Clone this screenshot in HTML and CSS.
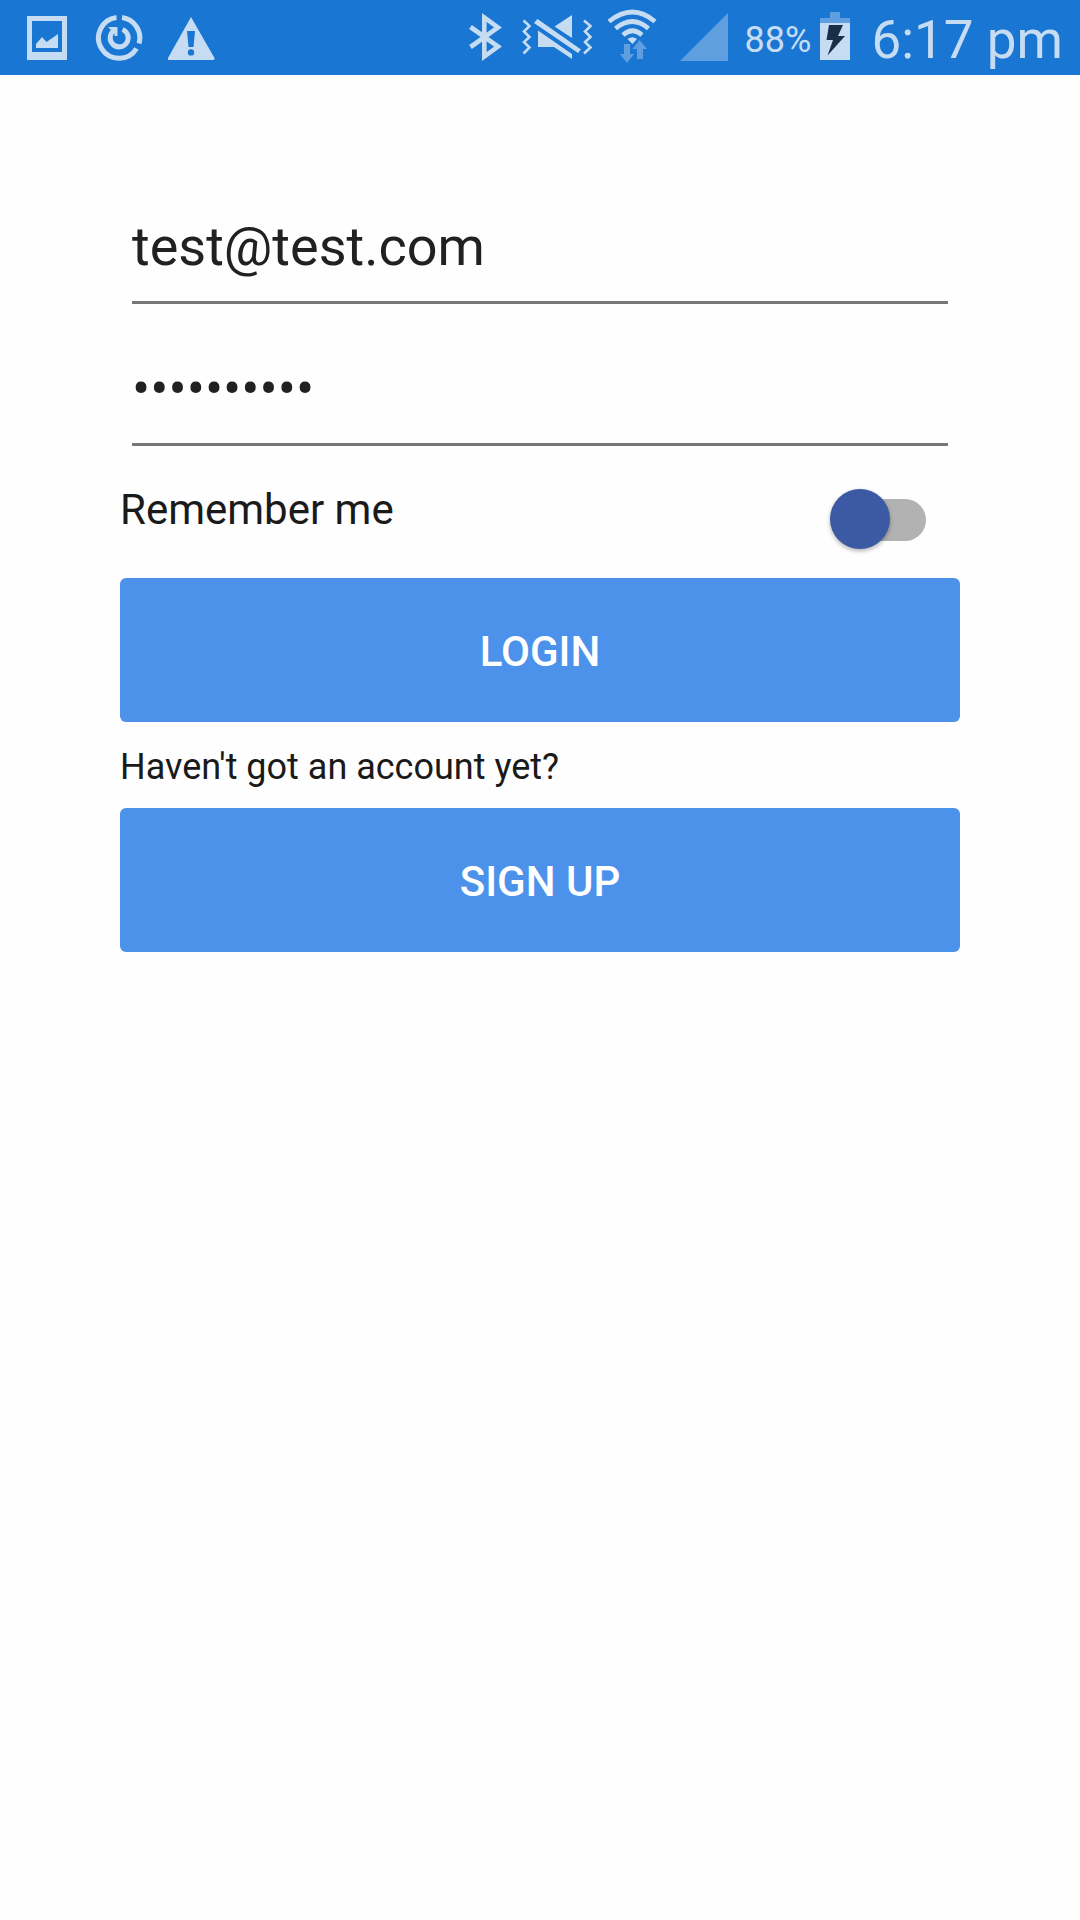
FILE: index.html
```html
<!DOCTYPE html>
<html lang="en">
<head>
<meta charset="utf-8">
<meta name="viewport" content="width=device-width, initial-scale=1">
<title>Login</title>
<link rel="stylesheet" href="styles.css">
</head>
<body>
<header class="status">
  <div class="status-group status-left">
    <svg width="46" height="75" viewBox="24 0 46 75" aria-hidden="true">
      <path fill="currentColor" fill-rule="evenodd" d="M27 16H67V60H27ZM32 21V52H62V21ZM36 44L42 37L46.500 42L58 34V48H36Z"/>
    </svg>
    <svg width="48" height="75" viewBox="95 0 48 75" fill="none" stroke="currentColor" stroke-width="5" aria-hidden="true">
      <path d="M116.500 17.500A20.500 20.500 0 1 0 136.500 48.500M122 17.500A20.500 20.500 0 0 1 139 43.500"/>
      <path d="M114 30.500A9 9 0 1 0 122.500 29.500"/>
      <path fill="currentColor" stroke="none" d="M108 27H117.500V36H114.500V32.500L111 34V30Z"/>
    </svg>
    <svg width="48" height="75" viewBox="168 0 48 75" aria-hidden="true">
      <path fill="currentColor" fill-rule="evenodd" d="M191 17L214.500 58Q215 60 213 60H169Q167 60 168 58ZM187 31L188.500 47H193.500L195 31ZM191 49.200A3.200 3.200 0 1 0 191 55.600A3.200 3.200 0 1 0 191 49.200Z"/>
    </svg>
  </div>
  <div class="status-group">
    <svg width="40" height="75" viewBox="467 0 40 75" fill="none" stroke="currentColor" stroke-width="4.600" aria-hidden="true">
      <path d="M469.500 27L497 46.500L483.300 56.500V17.500L497 27.500L469.500 47"/>
    </svg>
    <svg width="71" height="75" viewBox="521 0 71 75" aria-hidden="true">
      <path fill="currentColor" d="M553.500 26.500L571 15V38ZM537 30.500L571 54V59L553 47H537ZM536.500 19L580 49.500L577 53L533 23Z"/>
      <path fill="none" stroke="currentColor" stroke-width="2.600" d="M522.500 20.500L528.500 26L523 31.500L528.500 37L523 42L528.500 47.500L522.500 53.500M583 20.500L589.500 26L584 31.500L589.500 37L584 42L589.500 47.500L583 53.500"/>
    </svg>
    <svg width="51" height="75" viewBox="606 0 51 75" fill="none" stroke="currentColor" stroke-width="4.600" aria-hidden="true">
      <path d="M608 21.500Q631.500 2.500 654 21.500M614.500 28.500Q631.500 14.500 647.500 28.500M622 35Q631.500 26.500 641 35"/>
      <path fill="currentColor" stroke="none" d="M626.500 39Q631.500 35.500 636 39L631.500 44Z"/>
      <path class="dim" stroke="none" d="M623 44H629V54H633L626 63L619 54H623ZM638.500 40L646 49H642V59H636V49H631.500Z"/>
    </svg>
    <svg width="59" height="75" viewBox="671 0 59 75" aria-hidden="true">
      <path class="dim" d="M679 61L727 13V61Z"/>
    </svg>
    <div class="battery">
      <span class="percent">88%</span>
      <svg width="32" height="75" viewBox="819 0 32 75" aria-hidden="true">
        <path class="dim" d="M830 12H840V18H850V23H820V18H830Z"/>
        <path fill="currentColor" d="M820 23H850V60H820Z"/>
        <path class="bolt" d="M829 25H843L838 36H845L827.500 55.500L833 40H826.500Z"/>
      </svg>
    </div>
    <time class="clock" datetime="18:17">6:17 pm</time>
  </div>
</header>
<main>
  <form class="login">
    <input class="field" type="email" aria-label="Email" value="test@test.com">
    <input class="field" type="password" aria-label="Password" value="password12">
    <div class="remember">
      <label for="remember">Remember me</label>
      <input class="switch" id="remember" type="checkbox" role="switch">
    </div>
    <button class="action" type="submit">LOGIN</button>
    <p class="hint">Haven't got an account yet?</p>
    <button class="action" type="button">SIGN UP</button>
  </form>
</main>
</body>
</html>
```
FILE: styles.css
```css
* {
  box-sizing: border-box;
}

body {
  margin: 0;
  background: #fefefe;
  color: #1a1a1a;
  font-family: Roboto, "Liberation Sans", sans-serif;
}

.status {
  display: flex;
  justify-content: space-between;
  height: 75px;
  padding: 0 17px 0 24px;
  background: #1976d2;
  color: #c5dcf3;
}

.status svg {
  display: block;
  flex: none;
}

.status-group {
  display: flex;
  align-items: center;
  gap: 14px;
}

.status-left {
  gap: 25px;
}

.battery {
  display: flex;
  align-items: center;
  gap: 8px;
}

.percent {
  padding-top: 4px;
  font-size: 36px;
  line-height: 42px;
}

.clock {
  padding: 5px 0 0 6px;
  font-size: 53px;
  line-height: 64px;
  white-space: nowrap;
}

.dim {
  fill: #609fdf;
}

.bolt {
  fill: #192f48;
}

.login {
  display: flex;
  flex-direction: column;
  padding: 87px 120px;
}

.field {
  height: 112px;
  margin: 30px 12px 0;
  padding: 0;
  border: 0;
  border-bottom: 3px solid #777;
  border-radius: 0;
  outline: 0;
  background: transparent;
  color: #212121;
  font: 400 54px/64px Roboto, "Liberation Sans", sans-serif;
}

.remember {
  display: flex;
  justify-content: space-between;
  align-items: flex-start;
  height: 132px;
  padding: 40px 34px 0 0;
  font-size: 42px;
  line-height: 48px;
}

.switch {
  position: relative;
  width: 90px;
  height: 42px;
  margin: 13px 0 0;
  border-radius: 21px;
  appearance: none;
  background: #b2b2b2;
}

.switch::before {
  content: "";
  position: absolute;
  top: -10px;
  left: -6px;
  width: 60px;
  height: 60px;
  border-radius: 50%;
  background: #3b5aa3;
  box-shadow: 0 2px 4px rgba(0, 0, 0, 0.3);
}

.switch:checked::before {
  left: 36px;
}

.action {
  height: 144px;
  padding: 4px 0 0;
  border: 0;
  border-radius: 6px;
  background: #4c92ea;
  color: #fff;
  font: 500 42px/48px Roboto, "Liberation Sans", sans-serif;
}

.hint {
  margin: 0;
  padding: 24px 0 20px;
  font-size: 36px;
  line-height: 42px;
}
```
